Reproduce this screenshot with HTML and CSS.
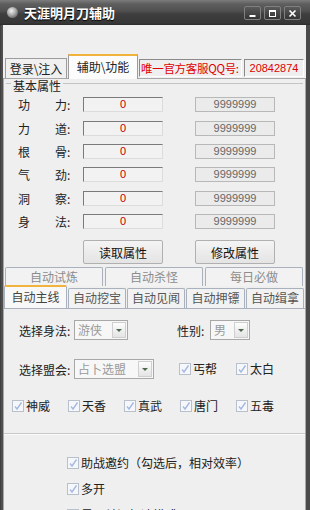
FILE: index.html
```html
<!DOCTYPE html>
<html lang="zh-CN">
<head>
  <meta charset="UTF-8">
  <meta name="viewport" content="width=device-width, initial-scale=1.0">
  <title>天涯明月刀辅助</title>
  <link rel="stylesheet" href="styles.css">
</head>
<body>
  <div class="window">

    <!-- Title bar -->
    <div class="titlebar">
      <span class="app-icon"></span>
      <span class="title">天涯明月刀辅助</span>
      <div class="controls">
        <span class="ctl"><svg width="9" height="9" viewBox="0 0 9 9"><rect x="1.5" y="6" width="6" height="2" fill="#fff"/></svg></span>
        <span class="ctl"><svg width="9" height="9" viewBox="0 0 9 9"><rect x="1.5" y="1.5" width="6" height="6" fill="none" stroke="#fff"/><rect x="1" y="1" width="7" height="2" fill="#fff"/></svg></span>
        <span class="ctl"><svg width="9" height="9" viewBox="0 0 9 9"><path d="M1.5 1.5 L7.5 7.5 M7.5 1.5 L1.5 7.5" stroke="#fff" stroke-width="1.6"/></svg></span>
      </div>
    </div>

    <div class="client">
      <!-- Main tabs -->
      <div class="main-tabs">
        <div class="tab">登录\注入</div>
        <div class="tab active">辅助\功能</div>
        <div class="qq-label">唯一官方客服QQ号:</div>
        <div class="qq-box">20842874</div>
      </div>

      <div class="panel">
        <div class="group-title"><span>基本属性</span></div>

        <div class="attr-row"><span class="lab1">功</span><span class="lab2">力:</span><span class="val">0</span><span class="max">9999999</span></div>
        <div class="attr-row"><span class="lab1">力</span><span class="lab2">道:</span><span class="val">0</span><span class="max">9999999</span></div>
        <div class="attr-row"><span class="lab1">根</span><span class="lab2">骨:</span><span class="val">0</span><span class="max">9999999</span></div>
        <div class="attr-row"><span class="lab1">气</span><span class="lab2">劲:</span><span class="val">0</span><span class="max">9999999</span></div>
        <div class="attr-row"><span class="lab1">洞</span><span class="lab2">察:</span><span class="val">0</span><span class="max">9999999</span></div>
        <div class="attr-row"><span class="lab1">身</span><span class="lab2">法:</span><span class="val">0</span><span class="max">9999999</span></div>

        <div class="btn-row">
          <button class="btn">读取属性</button>
          <button class="btn">修改属性</button>
        </div>

        <!-- Sub tabs -->
        <div class="sub-tabs back">
          <div class="stab">自动试炼</div>
          <div class="stab">自动杀怪</div>
          <div class="stab">每日必做</div>
        </div>
        <div class="sub-tabs front">
          <div class="stab active w63">自动主线</div>
          <div class="stab w58">自动挖宝</div>
          <div class="stab w58">自动见闻</div>
          <div class="stab w59">自动押镖</div>
          <div class="stab w58">自动缉拿</div>
        </div>

        <div class="sub-panel">
          <div class="form-row row-a">
            <span class="flabel">选择身法:</span>
            <span class="combo w54"><span class="combo-text">游侠</span><span class="combo-btn"><i></i></span></span>
            <span class="flabel gender">性别:</span>
            <span class="combo w40"><span class="combo-text">男</span><span class="combo-btn"><i></i></span></span>
          </div>

          <div class="form-row row-b">
            <span class="flabel">选择盟会:</span>
            <span class="combo w80"><span class="combo-text">占卜选盟</span><span class="combo-btn"><i></i></span></span>
            <label class="chk first"><span class="box"><svg viewBox="0 0 10 10"><path d="M2 5.5 L4 8 L8.5 1.5"/></svg></span>丐帮</label>
            <label class="chk"><span class="box"><svg viewBox="0 0 10 10"><path d="M2 5.5 L4 8 L8.5 1.5"/></svg></span>太白</label>
          </div>

          <div class="chk-row">
            <label class="chk"><span class="box"><svg viewBox="0 0 10 10"><path d="M2 5.5 L4 8 L8.5 1.5"/></svg></span>神威</label>
            <label class="chk"><span class="box"><svg viewBox="0 0 10 10"><path d="M2 5.5 L4 8 L8.5 1.5"/></svg></span>天香</label>
            <label class="chk"><span class="box"><svg viewBox="0 0 10 10"><path d="M2 5.5 L4 8 L8.5 1.5"/></svg></span>真武</label>
            <label class="chk"><span class="box"><svg viewBox="0 0 10 10"><path d="M2 5.5 L4 8 L8.5 1.5"/></svg></span>唐门</label>
            <label class="chk"><span class="box"><svg viewBox="0 0 10 10"><path d="M2 5.5 L4 8 L8.5 1.5"/></svg></span>五毒</label>
          </div>

          <div class="separator"></div>

          <div class="option-list">
            <label class="chk"><span class="box"><svg viewBox="0 0 10 10"><path d="M2 5.5 L4 8 L8.5 1.5"/></svg></span>助战邀约（勾选后，相对效率）</label>
            <label class="chk"><span class="box"><svg viewBox="0 0 10 10"><path d="M2 5.5 L4 8 L8.5 1.5"/></svg></span>多开</label>
            <label class="chk"><span class="box"><svg viewBox="0 0 10 10"><path d="M2 5.5 L4 8 L8.5 1.5"/></svg></span>是否关闭加速模式</label>
          </div>
        </div>
      </div>
    </div>
  </div>
</body>
</html>
```

FILE: styles.css
```css
* {
  box-sizing: border-box;
}
body {
  margin: 0;
  width: 310px;
  height: 510px;
  overflow: hidden;
  background: #444;
  font-family: "Noto Sans CJK SC", "Noto Sans", sans-serif;
  font-size: 12px;
  color: #222;
}
.window {
  display: flex;
  flex-direction: column;
  height: 510px;
  background: linear-gradient(90deg, #3a3a3a, #555 2px, #4a4a4a 3px);
}

/* Title bar */
.titlebar {
  flex: none;
  height: 25px;
  display: flex;
  align-items: flex-start;
  padding: 0 9px 0 7px;
  background: linear-gradient(#7c7c7c 0, #5e5e5e 4px, #505050 11px, #3e3e3e 14px, #373737 23px, #2a2a2a 25px);
  color: #fff;
}
.app-icon {
  width: 11px;
  height: 11px;
  margin-top: 7px;
  margin-right: 6px;
  border-radius: 50%;
  background: radial-gradient(circle at 40% 35%, #f2f2f2 0, #a8a8a8 45%, #3a3a3a 100%);
}
.title {
  flex: 1;
  font-size: 13px;
  font-weight: bold;
  line-height: 25px;
  text-shadow: 0 1px 1px #000;
}
.controls {
  display: flex;
  gap: 3px;
  margin-top: 6px;
}
.ctl {
  width: 17px;
  height: 14px;
  display: flex;
  align-items: center;
  justify-content: center;
  border: 1px solid #808080;
  border-radius: 2px;
  background: linear-gradient(#5a5a5a, #343434);
}

/* Client area */
.client {
  flex: 1;
  margin: 0 4px 0 3px;
  padding-top: 28px;
  background: #efefef;
  display: flex;
  flex-direction: column;
}
.main-tabs {
  display: flex;
  align-items: flex-end;
  height: 25px;
  padding-left: 2px;
}
.tab {
  width: 62px;
  height: 20px;
  border: 1px solid #9c9c9c;
  border-bottom: none;
  background: #f0f0f0;
  text-align: center;
  line-height: 19px;
  font-size: 12px;
  color: #222;
}
.tab.active {
  width: 70px;
  height: 25px;
  margin-left: 1px;
  border-top: 2px solid #f0b33c;
  background: #fcfcfc;
  line-height: 22px;
  position: relative;
  top: 1px;
}
.qq-label {
  width: 103px;
  height: 18px;
  margin: 0 0 1px 1px;
  border: 1px solid;
  border-color: #8a8a8a #fff #fff #8a8a8a;
  color: #e00000;
  font-size: 11.5px;
  letter-spacing: -0.3px;
  line-height: 16px;
  white-space: nowrap;
  overflow: hidden;
  padding-left: 1px;
}
.qq-box {
  width: 60px;
  height: 18px;
  margin: 0 0 1px 2px;
  border: 1px solid;
  border-color: #8a8a8a #fff #fff #8a8a8a;
  color: #e00000;
  font-family: "Liberation Sans", sans-serif;
  font-size: 11px;
  line-height: 16px;
  text-align: center;
}

.panel {
  flex: 1;
  border: 1px solid #a8a8a8;
  border-bottom: none;
  background: #efefef;
}

/* Group box */
.group-title {
  display: flex;
  height: 14px;
  margin: 0 2px;
  line-height: 14px;
  font-size: 12px;
}
.group-title::before {
  content: "";
  width: 5px;
  margin-top: 4px;
  border-top: 1px solid #c4c4c4;
}
.group-title::after {
  content: "";
  flex: 1;
  margin-top: 4px;
  border-top: 1px solid #c4c4c4;
}
.group-title span {
  padding: 0 2px;
}

.attr-row {
  display: flex;
  align-items: center;
  height: 23.4px;
  padding-left: 14px;
}
.lab1 {
  width: 37px;
}
.lab2 {
  width: 28px;
}
.val {
  width: 80px;
  height: 15px;
  border: 1px solid;
  border-color: #7a7a7a #dcdcdc #dcdcdc #7a7a7a;
  background: #f2f2f2;
  color: #c00000;
  font-family: "Liberation Sans", sans-serif;
  font-size: 11px;
  line-height: 13px;
  text-align: center;
}
.max {
  width: 80px;
  height: 15px;
  margin-left: 32px;
  border: 1px solid #b8b8b8;
  background: #ebebeb;
  color: #666;
  font-family: "Liberation Sans", sans-serif;
  font-size: 11px;
  line-height: 13px;
  text-align: center;
}

.btn-row {
  display: flex;
  height: 25px;
  margin-top: 7px;
  padding-left: 79px;
  gap: 32px;
}
.btn {
  width: 80px;
  height: 24px;
  border: 1px solid #b0b0b0;
  border-radius: 2px;
  background: linear-gradient(#f4f4f4, #e4e4e4);
  font-family: "Noto Sans CJK SC", sans-serif;
  font-size: 12px;
  color: #111;
  padding: 0;
}

/* Sub tabs */
.sub-tabs {
  display: flex;
  align-items: flex-end;
}
.sub-tabs.back {
  height: 19px;
  margin-top: 2px;
  padding-left: 1px;
  gap: 2px;
}
.sub-tabs.back .stab {
  width: 98px;
  height: 19px;
  color: #8c8c8c;
}
.sub-tabs.front {
  height: 23px;
  margin-top: -1px;
  gap: 1px;
}
.stab {
  height: 20px;
  border: 1px solid #a9b2bc;
  border-bottom: none;
  border-radius: 2px 2px 0 0;
  background: #f2f2f2;
  text-align: center;
  line-height: 18px;
  color: #555;
  font-size: 12px;
  white-space: nowrap;
}
.stab.active {
  height: 23px;
  border-top: 2px solid #f0b33c;
  background: #f8f8f8;
  color: #444;
  line-height: 20px;
}
.w63 { width: 63px; }
.w58 { width: 58px; }
.w59 { width: 59px; }

.sub-panel {
  border-top: 1px solid #a9b2bc;
}

/* Form rows */
.form-row {
  display: flex;
  align-items: center;
  padding-left: 15px;
}
.row-a {
  height: 24px;
  margin-top: 9px;
}
.row-b {
  height: 22px;
  margin-top: 16px;
}
.flabel {
  width: 55px;
  white-space: nowrap;
}
.flabel.gender {
  width: 33px;
  margin-left: 49px;
}
.combo {
  display: flex;
  height: 20px;
  padding: 1px;
  border: 1px solid #a8a8a8;
  background: #f7f7f7;
}
.w54 { width: 54px; }
.w40 { width: 40px; }
.w80 { width: 80px; }
.combo-text {
  flex: 1;
  padding-left: 2px;
  color: #9a9a9a;
  line-height: 16px;
  white-space: nowrap;
  overflow: hidden;
}
.combo-btn {
  width: 14px;
  display: flex;
  align-items: center;
  justify-content: center;
  border: 1px solid #cfcfcf;
  background: linear-gradient(#fdfdfd, #e4e4e4);
}
.combo-btn i {
  width: 0;
  height: 0;
  border-left: 3px solid transparent;
  border-right: 3px solid transparent;
  border-top: 3px solid #4d6a4d;
}

/* Checkboxes */
.chk {
  display: flex;
  align-items: center;
  white-space: nowrap;
  line-height: 16px;
}
.box {
  width: 12px;
  height: 12px;
  margin-right: 2px;
  border: 1px solid #b8c0cc;
  background: #f6f7fa;
}
.box svg {
  display: block;
  width: 10px;
  height: 10px;
  fill: none;
  stroke: #a6b9e2;
  stroke-width: 1.4;
}
.row-b .chk {
  width: 57px;
}
.row-b .chk.first {
  margin-left: 25px;
}
.chk-row {
  display: flex;
  height: 16px;
  margin-top: 18px;
  padding-left: 8px;
}
.chk-row .chk {
  width: 56px;
}
.separator {
  margin-top: 19px;
  border-top: 1px solid #c8c8c8;
  border-bottom: 1px solid #fafafa;
}
.option-list {
  display: flex;
  flex-direction: column;
  gap: 8px;
  padding: 19px 0 0 63px;
}
.option-list .chk {
  height: 18px;
}
```
